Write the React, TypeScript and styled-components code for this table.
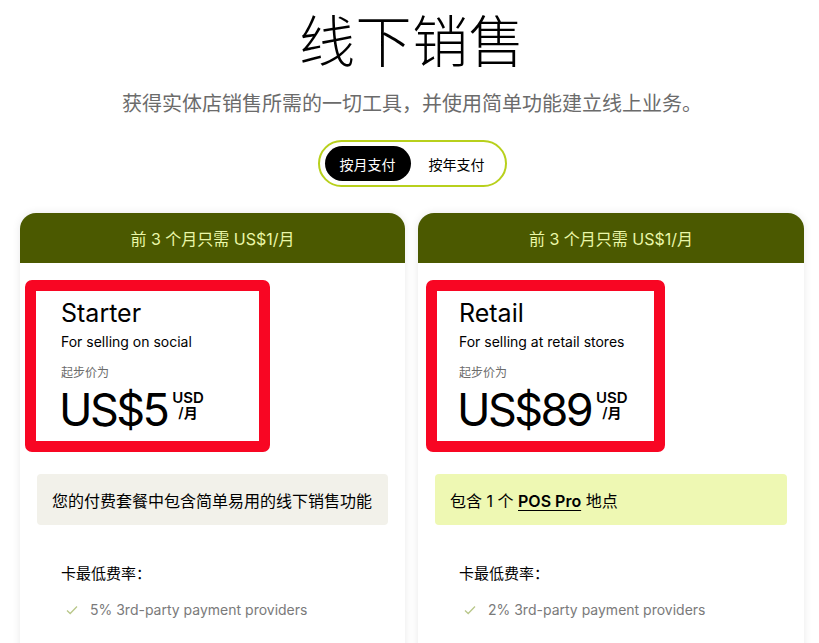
import * as React from "react";
import { useState } from "react";
import styled, { createGlobalStyle } from "styled-components";

const GlobalStyle = createGlobalStyle`
    html, body {
        margin: 0;
        padding: 0;
        background: #fff;
        font-family: Inter, "Noto Sans CJK SC", sans-serif;
        color: #000;
        overflow: hidden;
    }
`;

const Page = styled.div`
    width: 819px;
    height: 643px;
    box-sizing: border-box;
    padding: 0 15px 0 20px;
    display: flex;
    flex-direction: column;
    align-items: center;
`;

const Title = styled.h1`
    margin: 8px 0 0;
    font-size: 56px;
    line-height: 68px;
    font-weight: 300;
    letter-spacing: 0.5px;
`;

const Subtitle = styled.p`
    margin: 14px 0 0;
    font-size: 20px;
    line-height: 28px;
    color: #6b6b6b;
`;

const Toggle = styled.div`
    margin-top: 22px;
    display: flex;
    align-items: center;
    gap: 3px;
    padding: 4px 5px;
    border: 2px solid #b8d01c;
    border-radius: 999px;
    height: 47px;
    box-sizing: border-box;
`;

const ToggleButton = styled.button<{ active: boolean }>`
    border: none;
    cursor: pointer;
    height: 35px;
    padding: 0 15px;
    border-radius: 999px;
    font-family: inherit;
    font-size: 14px;
    background: ${p => (p.active ? "#000" : "transparent")};
    color: ${p => (p.active ? "#fff" : "#000")};
`;

const Cards = styled.div`
    margin-top: 26px;
    width: 100%;
    display: grid;
    grid-template-columns: 385px 386px;
    column-gap: 13px;
`;

const Card = styled.div`
    border-radius: 16px 16px 0 0;
    background: #fff;
    box-shadow: 0 0 8px rgba(0, 0, 0, 0.09);
    height: 440px;
    overflow: hidden;
`;

const Promo = styled.div`
    height: 50px;
    background: #4b5900;
    color: #eaf7a8;
    font-size: 16px;
    display: flex;
    align-items: center;
    justify-content: center;
`;

const Body = styled.div`
    padding: 17px 17px 0;
`;

const PlanHead = styled.div<{ shift: number; wide: number; inset: number }>`
    margin-left: ${p => p.shift}px;
    width: ${p => p.wide}px;
    height: 172px;
    box-sizing: border-box;
    border: 11px solid #f80623;
    border-radius: 7px;
    padding: 6px 0 0 ${p => p.inset}px;
`;

const PlanName = styled.div`
    font-size: 25px;
    line-height: 32px;
`;

const PlanDesc = styled.div`
    margin-top: 3px;
    font-size: 14px;
    line-height: 20px;
`;

const FromLabel = styled.div`
    margin-top: 13px;
    font-size: 12px;
    line-height: 16px;
    color: #6b6b6b;
`;

const PriceRow = styled.div`
    margin-top: 3px;
    margin-left: -2px;
    display: flex;
    align-items: flex-start;
`;

const Price = styled.span`
    font-size: 45px;
    line-height: 52px;
    letter-spacing: -2.6px;
`;

const Unit = styled.span`
    margin: 6px 0 0 5px;
    display: flex;
    flex-direction: column;
    align-items: center;
    font-weight: 600;
`;

const UnitCode = styled.span`
    font-size: 15px;
    line-height: 15px;
`;

const UnitPeriod = styled.span`
    font-size: 14px;
    line-height: 15px;
`;

const Included = styled.div<{ tone: string }>`
    margin-top: 22px;
    height: 51px;
    border-radius: 4px;
    background: ${p => p.tone};
    display: flex;
    align-items: center;
    padding: 0 15px;
    font-size: 16px;
    b {
        font-weight: 600;
        text-decoration: underline;
        text-underline-offset: 3px;
    }
`;

const RateTitle = styled.div`
    margin: 38px 0 0 24px;
    font-size: 15px;
    line-height: 22px;
`;

const RateItem = styled.div`
    margin: 16px 0 0 29px;
    display: flex;
    align-items: center;
    gap: 12px;
    font-size: 14px;
    color: #7a7a7a;
    svg {
        flex: none;
    }
`;

const Check = () => (
    <svg width="12" height="10" viewBox="0 0 12 10">
        <path d="M1 5.5 L4.2 8.5 L11 1.5" fill="none" stroke="#b9c78a" strokeWidth="1.3" />
    </svg>
);

type Plan = {
    name: string;
    desc: string;
    price: string;
    shift: number;
    wide: number;
    inset: number;
    tone: string;
    included: React.ReactNode;
    rate: string;
};

const plans: Plan[] = [
    {
        name: "Starter",
        desc: "For selling on social",
        price: "US$5",
        shift: -12,
        wide: 245,
        inset: 25,
        tone: "#f2f1ea",
        included: "您的付费套餐中包含简单易用的线下销售功能",
        rate: "5% 3rd-party payment providers",
    },
    {
        name: "Retail",
        desc: "For selling at retail stores",
        price: "US$89",
        shift: -9,
        wide: 239,
        inset: 22,
        tone: "#eef8b3",
        included: (
            <span>
                包含 1 个 <b>POS Pro</b> 地点
            </span>
        ),
        rate: "2% 3rd-party payment providers",
    },
];

export default function App() {
    const [yearly, setYearly] = useState(false);
    return (
        <Page>
            <GlobalStyle />
            <Title>线下销售</Title>
            <Subtitle>获得实体店销售所需的一切工具，并使用简单功能建立线上业务。</Subtitle>
            <Toggle>
                <ToggleButton active={!yearly} onClick={() => setYearly(false)}>按月支付</ToggleButton>
                <ToggleButton active={yearly} onClick={() => setYearly(true)}>按年支付</ToggleButton>
            </Toggle>
            <Cards>
                {plans.map(plan => (
                    <Card key={plan.name}>
                        <Promo>前 3 个月只需 US$1/月</Promo>
                        <Body>
                            <PlanHead shift={plan.shift} wide={plan.wide} inset={plan.inset}>
                                <PlanName>{plan.name}</PlanName>
                                <PlanDesc>{plan.desc}</PlanDesc>
                                <FromLabel>起步价为</FromLabel>
                                <PriceRow>
                                    <Price>{plan.price}</Price>
                                    <Unit>
                                        <UnitCode>USD</UnitCode>
                                        <UnitPeriod>/月</UnitPeriod>
                                    </Unit>
                                </PriceRow>
                            </PlanHead>
                            <Included tone={plan.tone}>{plan.included}</Included>
                            <RateTitle>卡最低费率：</RateTitle>
                            <RateItem>
                                <Check />
                                {plan.rate}
                            </RateItem>
                        </Body>
                    </Card>
                ))}
            </Cards>
        </Page>
    );
}
